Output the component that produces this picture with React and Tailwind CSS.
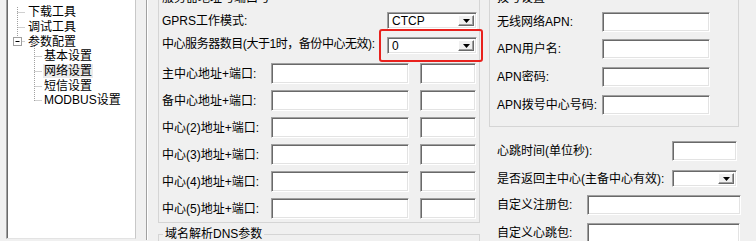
import React from 'react';

const sunken =
  'bg-white border border-t-[#a0a0a0] border-l-[#a0a0a0] border-r-white border-b-white shadow-[inset_1px_1px_0_#696969,inset_-1px_-1px_0_#e3e3e3]';

const Input = ({ className = '' }) => <div className={`${sunken} ${className}`} />;

const Combo = ({ value = '', className = '' }) => (
  <div className={`${sunken} flex items-stretch ${className}`}>
    <span className="flex-1 pl-[4px] flex items-center leading-none">{value}</span>
    <span className="w-[16px] my-[2px] mr-[2px] bg-[#f0f0f0] border border-t-white border-l-white border-r-[#696969] border-b-[#696969] shadow-[inset_-1px_-1px_0_#a0a0a0] flex items-center justify-center">
      <svg width="7" height="4" viewBox="0 0 7 4">
        <path d="M0 0h7L3.5 4z" fill="#000" />
      </svg>
    </span>
  </div>
);

const GroupBox = ({ title, titleClass, className = '', children }) => (
  <div className={`relative border border-[#d5d5d5] ${className}`}>
    <span className={`absolute -top-[9px] bg-[#f0f0f0] px-[2px] leading-[16px] whitespace-nowrap ${titleClass}`}>
      {title}
    </span>
    {children}
  </div>
);

const treeItems = [
  { label: '下载工具', level: 1 },
  { label: '调试工具', level: 1 },
  { label: '参数配置', level: 1 },
  { label: '基本设置', level: 2 },
  { label: '网络设置', level: 2, hot: true },
  { label: '短信设置', level: 2 },
  { label: 'MODBUS设置', level: 2 },
];

const addressRows = [
  '主中心地址+端口:',
  '备中心地址+端口:',
  '中心(2)地址+端口:',
  '中心(3)地址+端口:',
  '中心(4)地址+端口:',
  '中心(5)地址+端口:',
];

const dialRows = ['无线网络APN:', 'APN用户名:', 'APN密码:', 'APN拨号中心号码:'];

const Tree = () => (
  <div className="relative ml-[6px] w-[130px] h-[239px] bg-white border-l border-b border-r border-l-[#a0a0a0] border-b-[#e3e3e3] border-r-[#c8c8c8] shadow-[inset_1px_0_0_#696969] pt-[5px]">
    <svg className="absolute left-0 top-0" width="60" height="110" viewBox="0 0 60 110">
      <g stroke="#a0a0a0" strokeWidth="1" strokeDasharray="1 1" fill="none">
        <path d="M10.5 7v30" />
        <path d="M10.5 12.5h8" />
        <path d="M10.5 27.5h8" />
        <path d="M14.5 41.5h4" />
        <path d="M27.5 46v55" />
        <path d="M27.5 56.5h7" />
        <path d="M27.5 71.5h7" />
        <path d="M27.5 86.5h7" />
        <path d="M27.5 100.5h7" />
      </g>
      <rect x="6.5" y="37.5" width="8" height="8" fill="#fff" stroke="#a0a0a0" />
      <path d="M8.5 41.5h4" stroke="#000" />
    </svg>
    {treeItems.map((item) => (
      <div
        key={item.label}
        className={`relative h-[14.7px] flex items-center whitespace-nowrap ${item.level === 1 ? 'pl-[20px]' : 'pl-[36px]'}`}
      >
        <span className={`px-[1px] leading-[14px] ${item.hot ? 'bg-[#ebebeb]' : ''}`}>{item.label}</span>
      </div>
    ))}
  </div>
);

export default function App() {
  return (
    <div className="w-[756px] h-[241px] overflow-hidden bg-[#f0f0f0] flex items-start text-[12px] text-black font-['Liberation_Sans','Noto_Sans_CJK_SC',sans-serif]">
      <Tree />

      <div className="ml-[10px] w-[1px] h-[240px] bg-[#a0a0a0] shadow-[1px_0_0_#fff]" />

      <div className="ml-[11px] flex flex-col">
        <GroupBox
          title="服务器地址与端口号"
          titleClass="left-[1px]"
          className="w-[322px] h-[225px] -mt-[2px] pt-[13px] pl-[3px] pr-[2px]"
        >
          <div className="absolute left-[220px] top-[30px] w-[104px] h-[33px] border-2 border-[#e8211d] rounded-[3px]" />
          <div className="h-[17px] flex items-center">
            <span>GPRS工作模式:</span>
            <Combo value="CTCP" className="ml-auto w-[90px] h-[17px]" />
          </div>
          <div className="mt-[8px] h-[17px] flex items-center">
            <span className="-mt-[3px] whitespace-nowrap tracking-[-0.45px]">中心服务器数目(大于1时，备份中心无效):</span>
            <Combo value="0" className="ml-auto w-[90px] h-[17px]" />
          </div>
          <div className="mt-[9px] flex flex-col gap-[6px]">
            {addressRows.map((label) => (
              <div key={label} className="h-[21px] flex items-center">
                <span className="w-[109px] whitespace-nowrap">{label}</span>
                <Input className="w-[138px] h-[21px]" />
                <Input className="ml-[11px] w-[56px] h-[21px]" />
              </div>
            ))}
          </div>
        </GroupBox>

        <GroupBox title="域名解析DNS参数" titleClass="left-[4px]" className="mt-[11px] w-[322px] h-[30px]" />
      </div>

      <div className="ml-[9px] flex flex-col">
        <GroupBox
          title="拨号设置"
          titleClass="left-[5px]"
          className="w-[250px] h-[129px] -mt-[2px] pt-[13px] pl-[7px]"
        >
          {dialRows.map((label, i) => (
            <div key={label} className={`h-[20px] flex items-center ${i === 0 ? '' : i === 1 ? 'mt-[7px]' : 'mt-[8px]'}`}>
              <span className="w-[105px] whitespace-nowrap">{label}</span>
              <Input className="w-[108px] h-[20px]" />
            </div>
          ))}
        </GroupBox>

        <div className="pl-[8px]">
          <div className="mt-[14px] h-[20px] flex items-center">
            <span className="w-[175px] whitespace-nowrap">心跳时间(单位秒):</span>
            <Input className="w-[65px] h-[20px]" />
          </div>
          <div className="mt-[9px] h-[17px] flex items-center">
            <span className="w-[175px] whitespace-nowrap">是否返回主中心(主备中心有效):</span>
            <Combo className="w-[65px] h-[17px]" />
          </div>
          <div className="mt-[8px] h-[20px] flex items-center">
            <span className="w-[90px] whitespace-nowrap">自定义注册包:</span>
            <Input className="w-[154px] h-[20px]" />
          </div>
          <div className="mt-[8px] h-[20px] flex items-center">
            <span className="w-[90px] whitespace-nowrap">自定义心跳包:</span>
            <Input className="w-[153px] h-[20px]" />
          </div>
        </div>
      </div>
    </div>
  );
}
